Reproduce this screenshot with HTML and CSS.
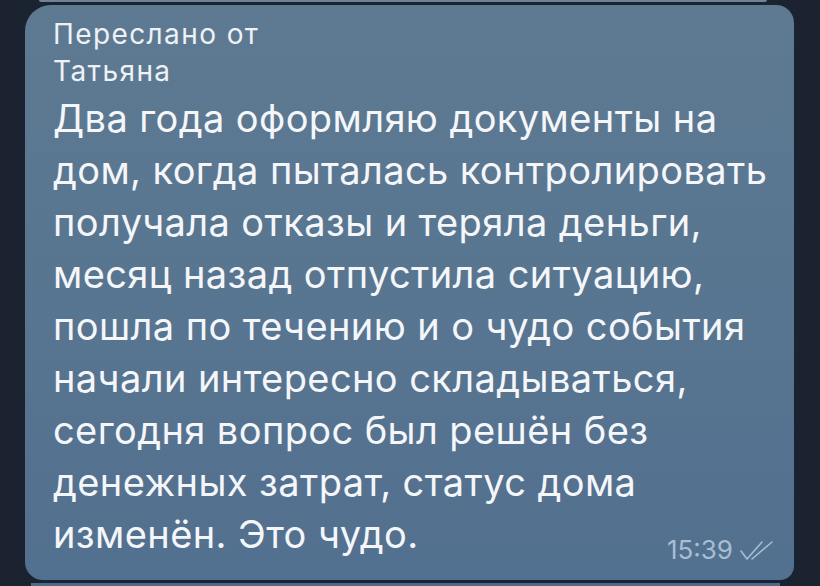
FILE: index.html
```html
<!DOCTYPE html>
<html lang="ru">
<head>
<meta charset="utf-8">
<link rel="stylesheet" href="styles.css">
</head>
<body>
<div class="prev"></div>
<div class="bubble">
  <div class="fwd">Переслано от<br>Татьяна</div>
  <div class="text">Два года оформляю документы на<br>дом, когда пыталась контролировать<br>получала отказы и теряла деньги,<br>месяц назад отпустила ситуацию,<br>пошла по течению и о чудо события<br>начали интересно складываться,<br>сегодня вопрос был решён без<br>денежных затрат, статус дома<br>изменён. Это чудо.</div>
  <div class="meta"><span class="time">15:39</span><svg class="check" width="35" height="21" viewBox="0 0 35 21"><path d="M2 11 L8 19 L23 2 M13 19 L33 2" fill="none" stroke="currentColor" stroke-width="1.6" stroke-linecap="round" stroke-linejoin="round"/></svg></div>
</div>
<div class="next"></div>
</body>
</html>
```
FILE: styles.css
```css
html, body { margin: 0; padding: 0; }
body {
  width: 820px;
  height: 586px;
  overflow: hidden;
  background: #1b2230;
  font-family: Inter, "Noto Sans", sans-serif;
  color: #f4f6f9;
}
.prev {
  height: 2px;
  margin: 0 53px 0 39px;
  background: #6d8399;
  border-radius: 0 0 4px 4px;
}
.bubble {
  position: relative;
  margin: 3px 26px 0 25px;
  height: 575px;
  box-sizing: border-box;
  background: linear-gradient(#5e7a92, #52708f);
  border-radius: 26px 18px 14px 18px;
  padding: 11px 20px 0 28px;
}
.fwd {
  font-size: 28px;
  line-height: 37px;
  letter-spacing: 1.4px;
  color: #eef2f6;
}
.text {
  margin-top: 2px;
  font-size: 38px;
  line-height: 52px;
  letter-spacing: 0.4px;
  white-space: nowrap;
}
.meta {
  position: absolute;
  right: 20px;
  bottom: 15px;
  display: flex;
  align-items: center;
  gap: 6px;
  color: #a7bdd3;
  font-size: 26px;
  line-height: 30px;
}
.next {
  height: 3px;
  margin: 3px 40px 0 31px;
  background: #4f6a86;
}
```
